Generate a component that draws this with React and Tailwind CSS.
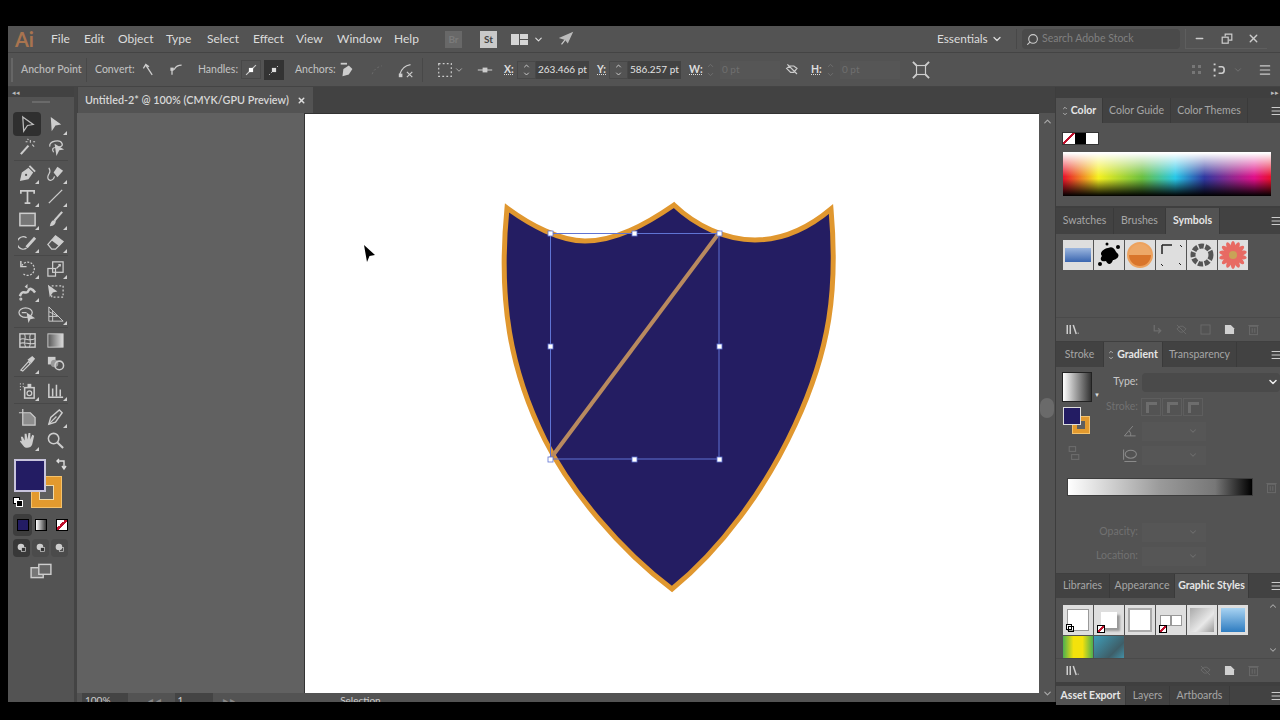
import { ChevronDown, ChevronUp, Search, Minus, X, Menu } from 'lucide-react'

const ICON = '#cdcdcd'

function Ico({ size = 20, children, className = '' }) {
  return (
    <svg width={size} height={size} viewBox="0 0 20 20" fill="none" stroke={ICON} strokeWidth="1.3" className={className}>
      {children}
    </svg>
  )
}

const TOOLS = {
  select: <path d="M5 2 L16 10 L10 11 L6 17 Z" stroke="#bdbdbd" />,
  direct: <path d="M5 2 L16 10 L10 11 L6 17 Z" fill={ICON} stroke="none" />,
  wand: <><path d="M3 17 L11 8" strokeWidth="2.2" /><path d="M13 2v3M10 4h-2M16 4h2M15 7l2 2M11 2l-1-1" strokeWidth="1.1" /></>,
  lasso: <><path d="M4 9c-1-6 11-8 13-3 1 3-3 4-7 4-3 0-4 2-2 5" /><path d="M9 6 L19 12 L14 13 L11 19 Z" fill={ICON} stroke="none" /></>,
  pen: <><path d="M2 18 L4 9 L11 4 L16 9 L11 16 Z" fill={ICON} stroke="none" /><path d="M12 2 L18 8" strokeWidth="2" /><circle cx="8.5" cy="11.5" r="1.2" fill="#535353" stroke="none" /></>,
  curve: <><path d="M8 9 L12 3 L18 7 L12 14 Z" fill={ICON} stroke="none" /><path d="M9 13 C7 19 1 18 2 13 C3 9 6 9 3 4" /></>,
  type: <path d="M3 7 V4 H17 V7 M10 4 V17 M7 17 H13" strokeWidth="1.8" />,
  line: <path d="M3 17 L17 3" strokeWidth="1.4" />,
  rect: <rect x="2" y="3.5" width="16" height="13" fill="#777" strokeWidth="1.6" />,
  brush: <><path d="M9 11 L17 2" strokeWidth="2.2" /><path d="M4 17 C5 12 7 10 10 11 C11 14 8 17 4 17 Z" fill={ICON} stroke="none" /></>,
  shaper: <><path d="M9 16 A6.5 6.5 0 1 1 9 5" strokeWidth="1.5" /><path d="M9 15 L18 5" strokeWidth="3" /></>,
  eraser: <><path d="M2 12 L10 3 L18 9 L10 17 H6 Z" stroke={ICON} /><path d="M6 8 L14 14 L18 9 L10 3 Z" fill={ICON} stroke="none" /></>,
  rotate: <><path d="M4 7 A7 7 0 1 1 5 15" strokeDasharray="2 1.5" /><path d="M3 2 V8 H9" strokeWidth="1.5" /></>,
  scale: <><rect x="2" y="10" width="8" height="8" /><rect x="7" y="3" width="11" height="11" /><path d="M11 10 L15 6 M13 6 H15 V8" /></>,
  warp: <><path d="M2 15 C5 6 9 15 11 9 C12 6 15 7 18 11" strokeWidth="2.6" /><path d="M7 5 L10 2 L10 7Z" fill={ICON} stroke="none" /><circle cx="3" cy="18" r="1" /></>,
  free: <><rect x="6" y="4" width="12" height="12" strokeDasharray="2 2" /><path d="M2 3 L12 10 L7 11 L4 16 Z" fill={ICON} stroke="none" /></>,
  puppet: <><ellipse cx="8" cy="8" rx="7" ry="5" /><path d="M9 8 L18 14 L13 15 L11 19 Z" fill={ICON} stroke="none" /><path d="M4 8h5" /></>,
  persp: <><path d="M3 2 V17 H18 L3 2 M3 7 L13 12 M7 6 V17 M3 12 H12" strokeWidth="1" /></>,
  mesh: <><rect x="2" y="3" width="16" height="14" strokeWidth="1.5" /><path d="M2 9 C7 6 11 12 18 8 M2 13 C7 11 12 15 18 13 M7 3 C9 8 5 12 8 17 M13 3 C11 8 15 12 12 17" strokeWidth="1.1" /></>,
  grad: <><defs><linearGradient id="toolgrad"><stop offset="0" stopColor="#555" /><stop offset="1" stopColor="#ddd" /></linearGradient></defs><rect x="2" y="3" width="16" height="14" fill="url(#toolgrad)" strokeWidth="1" /></>,
  eyedrop: <><path d="M3 17 L11 8 L13 10 L5 18 Z" /><path d="M10 6 L15 2 L18 5 L14 10 Z" fill={ICON} stroke="none" /></>,
  blend: <><rect x="2" y="3" width="8" height="8" fill={ICON} stroke="none" /><circle cx="9" cy="10" r="4" fill="#999" stroke="none" /><circle cx="14" cy="12" r="4.5" strokeWidth="1.6" /></>,
  spray: <><rect x="7" y="7" width="10" height="11" strokeWidth="1.6" /><rect x="10" y="3" width="4" height="4" fill={ICON} stroke="none" /><circle cx="12" cy="13" r="2.5" /><path d="M2 3h1M5 3h1M2 6h1M5 6h1M2 9h1" strokeWidth="1.4" /></>,
  chart: <path d="M3 3 V17 H18 M7 16 V8 M11 16 V4 M15 16 V9" strokeWidth="1.6" />,
  artboard: <><path d="M5 1 V5 H1" /><path d="M5 5 H13 L18 10 V18 H5 Z" fill="#8d8d8d" stroke={ICON} /></>,
  slice: <><path d="M3 17 L5 10 L14 2 L17 5 L10 15 Z" strokeWidth="1.5" /><path d="M3 17 L11 9" /></>,
  hand: <path d="M4 11 L3 6 L5 6 L7 10 L7 3 L9 3 L10 9 L11 2 L13 2 L13 9 L15 4 L17 5 L15 14 C14 18 8 19 6 16 L2 11 L3 10 Z" fill={ICON} stroke="none" />,
  zoom: <><circle cx="8" cy="8" r="5.5" strokeWidth="1.6" /><path d="M12 12 L18 18" strokeWidth="2.2" /></>,
}

function Tool({ name, corner, active }) {
  return (
    <div className={`relative flex h-full w-[28px] items-center justify-center ${active ? 'rounded-sm bg-[#2f2f2f]' : ''}`}>
      <Ico size={19}>{TOOLS[name]}</Ico>
      {corner && <span className="absolute bottom-[1px] right-[2px] h-0 w-0 border-b-[4px] border-l-[4px] border-b-[#cfcfcf] border-l-transparent" />}
    </div>
  )
}

function ToolRow({ a, b, ca, cb, active }) {
  return (
    <div className="flex h-[23px] pl-[5px]">
      <Tool name={a} corner={ca} active={active} />
      <Tool name={b} corner={cb} />
    </div>
  )
}

function Divider() {
  return <div className="mx-[6px] my-[1px] h-px bg-[#484848]" />
}

function Toolbar() {
  return (
    <div className="flex w-[66px] shrink-0 flex-col bg-[#535353]">
      <div className="flex h-[10px] items-center bg-[#424242] pl-[4px] text-[7px] leading-none text-[#bbb]">◂◂</div>
      <div className="flex h-[15px] justify-center pt-[4px]"><div className="h-[2px] w-[18px] bg-[#6a6a6a]" /></div>
      <div className="flex h-[24px] pl-[5px]">
        <Tool name="select" active />
        <Tool name="direct" corner />
      </div>
      <ToolRow a="wand" b="lasso" />
      <div className="h-[3px]"><Divider /></div>
      <ToolRow a="pen" b="curve" ca cb />
      <ToolRow a="type" b="line" ca cb />
      <ToolRow a="rect" b="brush" ca cb />
      <ToolRow a="shaper" b="eraser" ca cb />
      <div className="h-[3px]"><Divider /></div>
      <ToolRow a="rotate" b="scale" ca cb />
      <ToolRow a="warp" b="free" ca />
      <ToolRow a="puppet" b="persp" cb />
      <div className="h-[3px]"><Divider /></div>
      <ToolRow a="mesh" b="grad" />
      <ToolRow a="eyedrop" b="blend" ca />
      <div className="h-[4px]"><Divider /></div>
      <ToolRow a="spray" b="chart" ca cb />
      <div className="h-[4px]"><Divider /></div>
      <ToolRow a="artboard" b="slice" cb />
      <ToolRow a="hand" b="zoom" ca />

      {/* fill and stroke */}
      <div className="relative h-[61px]">
        <div className="absolute left-[23px] top-[24px] flex h-[32px] w-[31px] items-center justify-center border border-[#f5c26b] bg-[#e39a2e]">
          <div className="h-[15px] w-[15px] border border-[#f0d9a8] bg-[#5f5f5f]" />
        </div>
        <div className="absolute left-[6px] top-[7px] h-[33px] w-[32px] border-2 border-[#c8c4dc] bg-[#231c63]" />
        <svg className="absolute left-[46px] top-[6px]" width="14" height="14" viewBox="0 0 14 14" fill="none" stroke="#ddd" strokeWidth="1.4">
          <path d="M3 3 H10 V10 M8 8 L10 11 L12 8 M5 1 L3 3 L5 5" />
        </svg>
        <div className="absolute left-[5px] top-[45px] h-[7px] w-[7px] border border-black bg-white" />
        <div className="absolute left-[8px] top-[48px] h-[7px] w-[7px] border border-white bg-black" />
      </div>
      <div className="flex h-[23px] items-center gap-[3px] pl-[5px]">
        <div className="flex h-[22px] w-[19px] items-center justify-center rounded-sm bg-[#3d3d3d]"><div className="h-[12px] w-[12px] border border-black bg-[#231c63]" /></div>
        <div className="h-[12px] w-[12px] border border-black bg-[linear-gradient(90deg,#fff,#333)]" />
        <div className="ml-[6px] h-[12px] w-[12px] border border-black bg-[linear-gradient(135deg,#fff_40%,#c0102c_40%,#c0102c_60%,#fff_60%)]" />
      </div>
      <div className="flex h-[23px] items-center gap-[2px] pl-[5px]">
        {[0, 1, 2].map(i => (
          <div key={i} className={`flex h-[18px] w-[17px] items-center justify-center rounded-sm ${i === 0 ? 'bg-[#383838]' : 'bg-[#4b4b4b]'}`}>
            <Ico size={11}><circle cx="9" cy="9" r="6" fill={ICON} stroke="none" /><rect x="10" y="10" width="7" height="7" fill={i === 2 ? 'none' : '#333'} stroke={ICON} /></Ico>
          </div>
        ))}
      </div>
      <div className="flex h-[24px] items-center justify-center">
        <Ico size={22}><rect x="1" y="7" width="11" height="9" fill="#777" /><rect x="8" y="4" width="11" height="9" fill="#666" /></Ico>
      </div>
    </div>
  )
}

function MenuBar() {
  const items = [['File', 'w-[33px]'], ['Edit', 'w-[34px]'], ['Object', 'w-[48px]'], ['Type', 'w-[41px]'], ['Select', 'w-[46px]'], ['Effect', 'w-[43px]'], ['View', 'w-[41px]'], ['Window', 'w-[57px]'], ['Help', 'w-[40px]']]
  return (
    <div className="flex h-[27px] shrink-0 items-center border-b border-[#444] bg-[#535353] text-[12px] text-[#dcdcdc]">
      <span className="ml-[7px] w-[36px] text-[20px] font-bold leading-none text-[#a9744f]">Ai</span>
      {items.map(([t, w]) => <span key={t} className={w}>{t}</span>)}
      <div className="ml-[11px] flex h-[17px] w-[17px] items-center justify-center bg-[#686868] text-[10px] font-bold text-[#7b7b7b]">Br</div>
      <div className="ml-[18px] flex h-[17px] w-[17px] items-center justify-center bg-[#c9c9c9] text-[10px] font-bold text-[#444]">St</div>
      <div className="ml-[14px] flex gap-[1px]">
        <div className="h-[11px] w-[8px] bg-[#d5d5d5]" />
        <div className="flex w-[8px] flex-col gap-[1px]"><div className="h-[5px] bg-[#d5d5d5]" /><div className="h-[5px] bg-[#d5d5d5]" /></div>
      </div>
      <ChevronDown size={11} color="#ddd" strokeWidth={2.5} className="ml-[5px]" />
      <Ico size={18} className="ml-[13px]"><path d="M2 9 L18 2 L12 15 L9 11 Z" fill="#bbb" stroke="none" /><path d="M5 16 L9 11" /></Ico>
      <span className="ml-[362px] w-[54px] whitespace-nowrap text-[11.8px] text-[#dcdcdc]">Essentials</span>
      <ChevronDown size={12} color="#ddd" strokeWidth={2.5} />
      <div className="ml-[13px] h-[20px] w-px bg-[#484848]" />
      <div className="ml-[5px] flex h-[20px] w-[158px] items-center gap-[3px] rounded-sm bg-[#4a4a4a] pl-[4px] text-[10.5px] text-[#808080]">
        <Search size={13} color="#ccc" className="-scale-x-100" />
        <span>Search Adobe Stock</span>
      </div>
      <div className="ml-[5px] flex h-[20px] items-center border-b border-l border-[#5e5e5e]">
        <div className="flex w-[27px] justify-center"><Minus size={11} color="#ccc" strokeWidth={3} /></div>
        <div className="flex w-[27px] justify-center"><Ico size={12}><rect x="2" y="7" width="10" height="10" strokeWidth="2" /><path d="M7 6 V2 H18 V12 H13" strokeWidth="2" /></Ico></div>
        <div className="flex w-[27px] justify-center"><X size={13} color="#ccc" strokeWidth={2.5} /></div>
      </div>
    </div>
  )
}

function Spin({ dim }) {
  const c = dim ? '#6e6e6e' : '#ddd'
  return (
    <div className={`flex h-[18px] w-[19px] shrink-0 flex-col items-center justify-center ${dim ? '' : 'border border-[#484848]'}`}>
      <ChevronUp size={9} color={c} strokeWidth={2.5} />
      <ChevronDown size={9} color={c} strokeWidth={2.5} />
    </div>
  )
}

function Field({ w, dim, children }) {
  return (
    <div className={`flex h-[18px] shrink-0 items-center whitespace-nowrap pl-[2px] text-[10px] ${w} ${dim ? 'bg-[#565656] text-[#6f6f6f]' : 'bg-[#424242] text-[#e2e2e2]'}`}>{children}</div>
  )
}

function ControlBar() {
  return (
    <div className="flex h-[34px] shrink-0 items-center border-b border-[#444] bg-[#535353] text-[10.5px] text-[#c4c4c4]">
      <div className="ml-[3px] h-[24px] w-[2px] bg-[#666]" />
      <span className="ml-[8px] w-[59px] whitespace-nowrap font-semibold text-[#b8b8b8]">Anchor Point</span>
      <div className="ml-[6px] h-[24px] w-px bg-[#484848]" />
      <span className="ml-[8px] w-[46px]">Convert:</span>
      <Ico size={16}><path d="M6 4 L14 16 M3 8 L6 3 L10 6" strokeWidth="1.6" /></Ico>
      <Ico size={16} className="ml-[11px]"><path d="M5 16 V9 H8 C10 5 13 4 17 4" strokeWidth="1.6" /><rect x="3" y="7" width="4" height="4" fill={ICON} stroke="none" /></Ico>
      <span className="ml-[14px] w-[43px]">Handles:</span>
      <div className="flex h-[19px] w-[20px] items-center justify-center border border-[#484848]"><Ico size={14}><path d="M3 17 L17 3" strokeWidth="1.6" /><rect x="7" y="7" width="6" height="6" fill="#fff" stroke="none" /></Ico></div>
      <div className="ml-[3px] flex h-[20px] w-[20px] items-center justify-center bg-[#333]"><Ico size={14}><path d="M3 17 L17 3" strokeDasharray="2 2" /><rect x="7" y="7" width="6" height="6" fill="#ddd" stroke="none" /></Ico></div>
      <span className="ml-[11px] w-[43px]">Anchors:</span>
      <Ico size={18}><path d="M5 17 L6 9 L12 5 L16 9 L12 15 Z" fill={ICON} stroke="none" /><path d="M3 3 H10" strokeWidth="2" /></Ico>
      <Ico size={14} className="ml-[14px]"><path d="M3 16 C5 10 10 6 17 4" stroke="#6d6d6d" strokeDasharray="3 3" /></Ico>
      <Ico size={18} className="ml-[13px]"><path d="M3 15 C5 8 9 5 15 4" /><rect x="2" y="14" width="4" height="4" fill={ICON} stroke="none" /><path d="M11 12 L17 18 M17 12 L11 18" /></Ico>
      <div className="ml-[7px] h-[24px] w-px bg-[#484848]" />
      <Ico size={18} className="ml-[13px]"><rect x="3" y="3" width="14" height="14" strokeDasharray="2 2.5" /></Ico>
      <ChevronDown size={10} color="#bbb" />
      <Ico size={16} className="ml-[13px]"><path d="M1 10 H19" /><rect x="7" y="7" width="6" height="6" fill={ICON} stroke="none" /></Ico>
      <span className="ml-[11px] w-[13px] font-bold text-[#ddd] underline decoration-dotted">X:</span>
      <Spin />
      <Field w="w-[53px]">263.466 pt</Field>
      <span className="ml-[8px] w-[12px] font-bold text-[#ddd] underline decoration-dotted">Y:</span>
      <Spin />
      <Field w="w-[53px]">586.257 pt</Field>
      <span className="ml-[8px] w-[12px] font-bold text-[#ddd] underline decoration-dotted">W:</span>
      <Spin dim />
      <Field w="w-[60px]" dim>0 pt</Field>
      <Ico size={16} className="ml-[5px]"><path d="M2 8 L6 5 H11 L15 8 L11 13 H7 Z M3 3 L15 15" strokeWidth="1.5" /></Ico>
      <span className="ml-[10px] w-[10px] font-bold text-[#ddd] underline decoration-dotted">H:</span>
      <Spin dim />
      <Field w="w-[60px]" dim>0 pt</Field>
      <Ico size={18} className="ml-[12px]"><rect x="5" y="5" width="10" height="10" /><path d="M1 1 L5 5 M19 1 L15 5 M1 19 L5 15 M19 19 L15 15" strokeWidth="2" /></Ico>
      <div className="ml-[262px] grid grid-cols-2 gap-[3px]">
        {[0, 1, 2, 3].map(i => <div key={i} className="h-[3px] w-[3px] bg-[#777]" />)}
      </div>
      <Ico size={16} className="ml-[12px]"><path d="M2 2 V4 M2 8 V12 M2 16 V18" strokeWidth="2.4" /><path d="M7 6 H11 C15 6 15 14 11 14 H7" strokeWidth="2" /></Ico>
      <ChevronDown size={10} color="#777" className="ml-[4px]" />
      <Menu size={14} color="#ccc" className="ml-[15px]" />
    </div>
  )
}

function Canvas() {
  return (
    <div className="flex flex-1 flex-col">
      <div className="flex h-[26px] shrink-0 bg-[#424242]">
        <div className="ml-[1px] flex w-[235px] items-center justify-between bg-[#535353] pl-[7px] pr-[7px] text-[10.8px] font-semibold text-[#d8d8d8]">
          <span className="whitespace-nowrap">Untitled-2* @ 100% (CMYK/GPU Preview)</span>
          <X size={9} color="#ddd" strokeWidth={4} />
        </div>
      </div>
      <div className="flex flex-1">
        <div className="flex flex-1 flex-col">
          <div className="flex-1 bg-[#616161] pl-[227px]">
            <div className="h-full border-l border-t border-[#333] bg-white">
              <svg className="block h-full w-full" viewBox="305 114 734 579">
                <path
                  d="M507 208 C530 225 560 241 585 241 C615 241 645 225 674 205 C695 225 725 240 755 240 C785 240 812 225 831 209 C838 290 830 350 795 425 C765 490 720 550 672 589 C620 550 570 490 545 440 C510 370 498 300 507 208 Z"
                  fill="#241d62" stroke="#e0972f" strokeWidth="5" strokeLinejoin="miter"
                />
                <path d="M551 458 L719 233" stroke="#b98a5f" strokeWidth="4" />
                <rect x="550.5" y="233.5" width="168.5" height="225.5" fill="none" stroke="#5f73d3" strokeWidth="1" />
                {[[550, 233], [634, 233], [719, 233], [550, 346], [719, 346], [550, 459], [634, 459], [719, 459]].map(([x, y]) => (
                  <rect key={`${x}-${y}`} x={x - 2} y={y - 2} width="5" height="5" fill="#fff" stroke="#5f73d3" strokeWidth="0.8" />
                ))}
                <path d="M364 245 L375 255 L369.5 256 L367 262 Z" fill="#000" />
              </svg>
            </div>
          </div>
          <div className="flex h-[9px] shrink-0 items-start overflow-hidden bg-[#535353] pl-[5px] text-[10px] leading-[14px] text-[#ccc]">
            <div className="w-[46px] bg-[#444] pl-[3px]">100%</div>
            <span className="ml-[20px] text-[#888]">◂ ◂</span>
            <div className="ml-[14px] w-[38px] bg-[#444] pl-[3px]">1</div>
            <span className="ml-[10px] text-[#888]">▸ ▸</span>
            <span className="ml-[105px]">Selection</span>
          </div>
        </div>
        <div className="flex w-[16px] shrink-0 flex-col items-center justify-between bg-[#535353] py-[3px]">
          <ChevronUp size={11} color="#aaa" strokeWidth={2.5} />
          <div className="h-[20px] w-[14px] rounded-full bg-[#6a6a6a]" />
          <ChevronDown size={11} color="#aaa" strokeWidth={2.5} />
        </div>
      </div>
    </div>
  )
}

function Tabs({ tabs, active, h = 'h-[25px]', arrows }) {
  return (
    <div className={`flex shrink-0 items-stretch bg-[#424242] text-[10.5px] ${h}`}>
      {tabs.map(([t, w]) => (
        <div key={t} className={`flex items-center justify-center whitespace-nowrap border-r border-[#3a3a3a] ${w} ${t === active ? 'bg-[#535353] font-bold text-[#e6e6e6]' : 'text-[#a6a6a6]'}`}>
          {t === active && arrows && (
            <span className="mr-[3px] flex flex-col">
              <ChevronUp size={6} color="#ccc" strokeWidth={3} />
              <ChevronDown size={6} color="#ccc" strokeWidth={3} />
            </span>
          )}
          {t}
        </div>
      ))}
      <div className="flex flex-1 items-center justify-end"><Menu size={12} color="#ccc" className="mr-[-2px]" /></div>
    </div>
  )
}

function Thumb({ children, h = 'h-[30px]' }) {
  return <div className={`relative flex w-[30px] shrink-0 items-center justify-center overflow-hidden bg-[#dedede] ${h}`}>{children}</div>
}

function NoneBadge() {
  return <span className="absolute bottom-[2px] left-[3px] h-[8px] w-[8px] border border-black bg-[linear-gradient(135deg,#fff_35%,#c0102c_35%,#c0102c_65%,#fff_65%)]" />
}

function PanelFooter({ icons }) {
  return (
    <div className="flex h-[24px] items-center border-t border-[#4a4a4a] pl-[9px] pr-[20px]">
      <Ico size={15}><path d="M3 4 V16 M7 4 V16 M11 4 L15 16 M17 15h1" strokeWidth="2" /></Ico>
      <div className="ml-auto flex items-center gap-[11px]">{icons}</div>
    </div>
  )
}

const dimIcon = p => <Ico size={13}>{p}</Ico>
const trash = <g stroke="#6d6d6d"><rect x="4" y="5" width="12" height="13" /><path d="M2 4 H18 M8 8 V15 M12 8 V15" /></g>
const newIcon = <path d="M3 3 H12 L17 8 V17 H3 Z" fill="#d0d0d0" stroke="none" />
const unlink = <path d="M3 9 L8 5 H12 L17 9 L12 14 H8 Z M3 3 L17 17" stroke="#6d6d6d" />

function Panels() {
  return (
    <div className="ml-px flex w-[224px] shrink-0 flex-col bg-[#3f3f3f]">
      <div className="flex h-[11px] shrink-0 items-center justify-end pr-[1px] text-[7px] leading-none text-[#bbb]">▸▸</div>

      {/* Color */}
      <div className="h-[108px] shrink-0 bg-[#535353]">
        <Tabs tabs={[['Color', 'w-[47px]'], ['Color Guide', 'w-[68px]'], ['Color Themes', 'w-[77px]']]} active="Color" arrows />
        <div className="ml-[6px] mt-[9px] flex h-[13px] w-[37px] border border-[#333]">
          <div className="flex-1 bg-[linear-gradient(135deg,#fff_40%,#c0102c_40%,#c0102c_55%,#fff_55%)]" />
          <div className="flex-1 bg-black" />
          <div className="flex-1 bg-white" />
        </div>
        <div className="ml-[7px] mt-[7px] h-[44px] w-[208px] border-t border-white bg-[linear-gradient(180deg,#fff_0%,transparent_55%,transparent_60%,#000_100%),linear-gradient(90deg,#e8102a_0%,#f5f020_17%,#6cc040_38%,#28c8e8_54%,#3038a0_68%,#8a2a90_80%,#e0108a_92%,#e8102a_100%)]" />
      </div>

      {/* Symbols */}
      <div className="mt-[2px] flex h-[133px] shrink-0 flex-col bg-[#535353]">
        <Tabs tabs={[['Swatches', 'w-[58px]'], ['Brushes', 'w-[52px]'], ['Symbols', 'w-[54px]']]} active="Symbols" h="h-[26px]" />
        <div className="ml-[7px] mt-[6px] flex gap-px">
          <Thumb><div className="h-[14px] w-[26px] bg-[linear-gradient(180deg,#9db7df,#3a66b0)]" /></Thumb>
          <Thumb>
            <svg width="26" height="26" viewBox="0 0 26 26"><path d="M12 6 C18 3 19 9 21 11 C25 14 20 18 17 18 C15 24 11 22 10 19 C6 20 3 18 6 14 C3 11 7 7 12 6 Z" fill="#000" /><circle cx="22" cy="5" r="2" fill="#000" /><circle cx="4" cy="22" r="2" fill="#000" /><circle cx="11" cy="2" r="1.5" fill="#000" /></svg>
          </Thumb>
          <Thumb><div className="h-[26px] w-[26px] rounded-full border-2 border-[#eda25e] bg-[linear-gradient(180deg,#eda868_50%,#d9752b_50%)]" /></Thumb>
          <Thumb>
            <svg width="26" height="26" viewBox="0 0 26 26" stroke="#222" fill="none"><path d="M4 3 H14 M4 3 V12" strokeWidth="1.5" /><path d="M22 3 L24 5 M3 22 L5 24 M23 23 L21 21" /></svg>
          </Thumb>
          <Thumb>
            <svg width="26" height="26" viewBox="0 0 26 26" fill="none"><circle cx="13" cy="13" r="9" stroke="#555" strokeWidth="5" strokeDasharray="5 1.5" /></svg>
          </Thumb>
          <Thumb>
            <svg width="28" height="28" viewBox="0 0 28 28">
              {Array.from({ length: 14 }, (_, i) => <ellipse key={i} cx="14" cy="6" rx="2.4" ry="6" fill="#e86a63" transform={`rotate(${i * 25.7} 14 14)`} />)}
              <circle cx="14" cy="14" r="4" fill="#c9a257" />
            </svg>
          </Thumb>
        </div>
        <div className="flex-1" />
        <PanelFooter icons={<>
          {dimIcon(<path d="M5 3 V12 H15 M11 8 L15 12 L11 16" stroke="#6d6d6d" strokeWidth="2" />)}
          {dimIcon(unlink)}
          {dimIcon(<rect x="3" y="3" width="14" height="14" stroke="#6d6d6d" />)}
          {dimIcon(newIcon)}
          {dimIcon(trash)}
        </>} />
      </div>

      {/* Gradient */}
      <div className="mt-px flex h-[231px] shrink-0 flex-col bg-[#535353]">
        <Tabs tabs={[['Stroke', 'w-[48px]'], ['Gradient', 'w-[59px]'], ['Transparency', 'w-[74px]']]} active="Gradient" arrows />
        <div className="flex pl-[6px] pt-[5px]">
          <div className="w-[44px] shrink-0">
            <div className="flex items-end">
              <div className="h-[30px] w-[30px] border border-[#222] bg-[linear-gradient(90deg,#fff,#333)]" />
              <span className="ml-[2px] text-[6px] leading-[14px] text-[#ddd]">▼</span>
            </div>
            <div className="relative mt-[5px] h-[30px]">
              <div className="absolute left-[10px] top-[9px] flex h-[18px] w-[18px] items-center justify-center border border-[#f5c26b] bg-[#e39a2e]"><div className="h-[8px] w-[8px] bg-[#5f5f5f]" /></div>
              <div className="absolute left-[1px] top-0 h-[18px] w-[18px] border border-[#ddd] bg-[#231c63]" />
            </div>
            <Ico size={16} className="ml-[4px] mt-[8px]"><g stroke="#6d6d6d"><rect x="4" y="2" width="8" height="6" /><rect x="7" y="12" width="9" height="6" /></g></Ico>
          </div>
          <div className="flex-1 text-[10.5px]">
            <div className="flex h-[20px] items-center">
              <span className="w-[32px] text-right text-[#c8c8c8]">Type:</span>
              <div className="ml-[4px] flex h-[19px] flex-1 items-center justify-end rounded-sm bg-[#4a4a4a] pr-[1px]"><ChevronDown size={12} color="#eee" strokeWidth={3} /></div>
            </div>
            <div className="mt-[5px] flex h-[20px] items-center">
              <span className="w-[32px] text-right text-[#717171]">Stroke:</span>
              <div className="ml-[3px] flex gap-[1px]">
                {[0, 1, 2].map(i => <div key={i} className="flex h-[18px] w-[20px] items-center justify-center border border-[#5e5e5e]"><div className="h-[11px] w-[11px] border-l-[3px] border-t-[3px] border-[#6d6d6d]" /></div>)}
              </div>
            </div>
            <div className="mt-[4px] flex h-[20px] items-center">
              <Ico size={14} className="ml-[17px]"><path d="M2 17 L14 3 M2 17 H18 M11 17 A8 8 0 0 0 9 10" stroke="#8a8a8a" /></Ico>
              <div className="ml-[5px] flex h-[19px] w-[64px] items-center justify-end bg-[#565656] pr-[8px]"><ChevronDown size={10} color="#6d6d6d" strokeWidth={2.5} /></div>
            </div>
            <div className="mt-[4px] flex h-[20px] items-center">
              <Ico size={16} className="ml-[16px]"><ellipse cx="11" cy="9" rx="7" ry="5" stroke="#8a8a8a" /><path d="M2 3 V16 M3 18 H18" stroke="#8a8a8a" /></Ico>
              <div className="ml-[4px] flex h-[19px] w-[64px] items-center justify-end bg-[#565656] pr-[8px]"><ChevronDown size={10} color="#6d6d6d" strokeWidth={2.5} /></div>
            </div>
          </div>
        </div>
        <div className="ml-[11px] mt-[13px] flex items-center">
          <div className="h-[18px] w-[186px] border border-[#3d3d3d] bg-[linear-gradient(90deg,#fff,#9a9a9a_50%,#777_80%,#000)]" />
          <Ico size={13} className="ml-[12px]">{trash}</Ico>
        </div>
        <div className="mt-[26px] flex h-[20px] items-center text-[10.5px] text-[#717171]">
          <span className="w-[82px] text-right">Opacity:</span>
          <div className="ml-[4px] flex h-[19px] w-[64px] items-center justify-end bg-[#565656] pr-[8px]"><ChevronDown size={10} color="#6d6d6d" strokeWidth={2.5} /></div>
        </div>
        <div className="mt-[4px] flex h-[20px] items-center text-[10.5px] text-[#717171]">
          <span className="w-[82px] text-right">Location:</span>
          <div className="ml-[4px] flex h-[19px] w-[64px] items-center justify-end bg-[#565656] pr-[8px]"><ChevronDown size={10} color="#6d6d6d" strokeWidth={2.5} /></div>
        </div>
      </div>

      {/* Graphic styles */}
      <div className="mt-px flex h-[108px] shrink-0 flex-col bg-[#535353]">
        <Tabs tabs={[['Libraries', 'w-[54px]'], ['Appearance', 'w-[65px]'], ['Graphic Styles', 'w-[74px]']]} active="Graphic Styles" h="h-[24px]" />
        <div className="flex h-[60px] overflow-hidden">
          <div className="ml-[7px] mt-[7px] flex w-[190px] flex-wrap content-start gap-px">
            <Thumb>
              <div className="h-[22px] w-[22px] border border-[#999] bg-white" />
              <span className="absolute bottom-[5px] left-[3px] h-[6px] w-[6px] border border-black bg-white" />
              <span className="absolute bottom-[3px] left-[5px] h-[6px] w-[6px] border border-black" />
            </Thumb>
            <Thumb><div className="h-[16px] w-[16px] bg-white shadow-[3px_3px_2px_#999]" /><NoneBadge /></Thumb>
            <Thumb><div className="h-[24px] w-[24px] border-2 border-[#aaa] bg-white" /></Thumb>
            <Thumb>
              <div className="h-[11px] w-[11px] border border-[#999] bg-white" />
              <div className="h-[11px] w-[11px] border border-[#999] bg-white" />
              <NoneBadge />
            </Thumb>
            <Thumb><div className="h-[24px] w-[24px] bg-[linear-gradient(135deg,#aaa,#e8e8e8_60%,#999)]" /></Thumb>
            <Thumb><div className="h-[24px] w-[24px] bg-[linear-gradient(180deg,#a8d3f2,#2e7cc0)]" /></Thumb>
            <Thumb><div className="h-full w-full bg-[linear-gradient(90deg,#4caf50,#f4e20c_35%,#f4e20c_65%,#4caf50)]" /></Thumb>
            <Thumb><div className="h-full w-full bg-[linear-gradient(135deg,#3f9db8,#3e5e68_60%,#45a8c4)]" /></Thumb>
          </div>
          <div className="ml-auto mr-[1px] flex w-[12px] flex-col items-center justify-between py-[3px]">
            <ChevronUp size={10} color="#aaa" strokeWidth={2.5} />
            <ChevronDown size={10} color="#aaa" strokeWidth={2.5} />
          </div>
        </div>
        <PanelFooter icons={<>
          {dimIcon(unlink)}
          {dimIcon(newIcon)}
          {dimIcon(trash)}
        </>} />
      </div>

      {/* Asset export */}
      <div className="mt-[4px] flex-1">
        <Tabs tabs={[['Asset Export', 'w-[70px]'], ['Layers', 'w-[44px]'], ['Artboards', 'w-[60px]']]} active="Asset Export" h="h-[19px]" />
      </div>
    </div>
  )
}

export default function App() {
  return (
    <div className="h-[720px] w-[1280px] overflow-hidden bg-black pb-[18px] pl-[8px] pt-[26px] font-['Lato','Open_Sans',sans-serif]">
      <div className="flex h-full flex-col bg-[#535353]">
        <MenuBar />
        <ControlBar />
        <div className="flex min-h-0 flex-1 bg-[#3d3d3d]">
          <Toolbar />
          <div className="w-[3px] shrink-0 bg-[#444]" />
          <Canvas />
          <Panels />
        </div>
      </div>
    </div>
  )
}
